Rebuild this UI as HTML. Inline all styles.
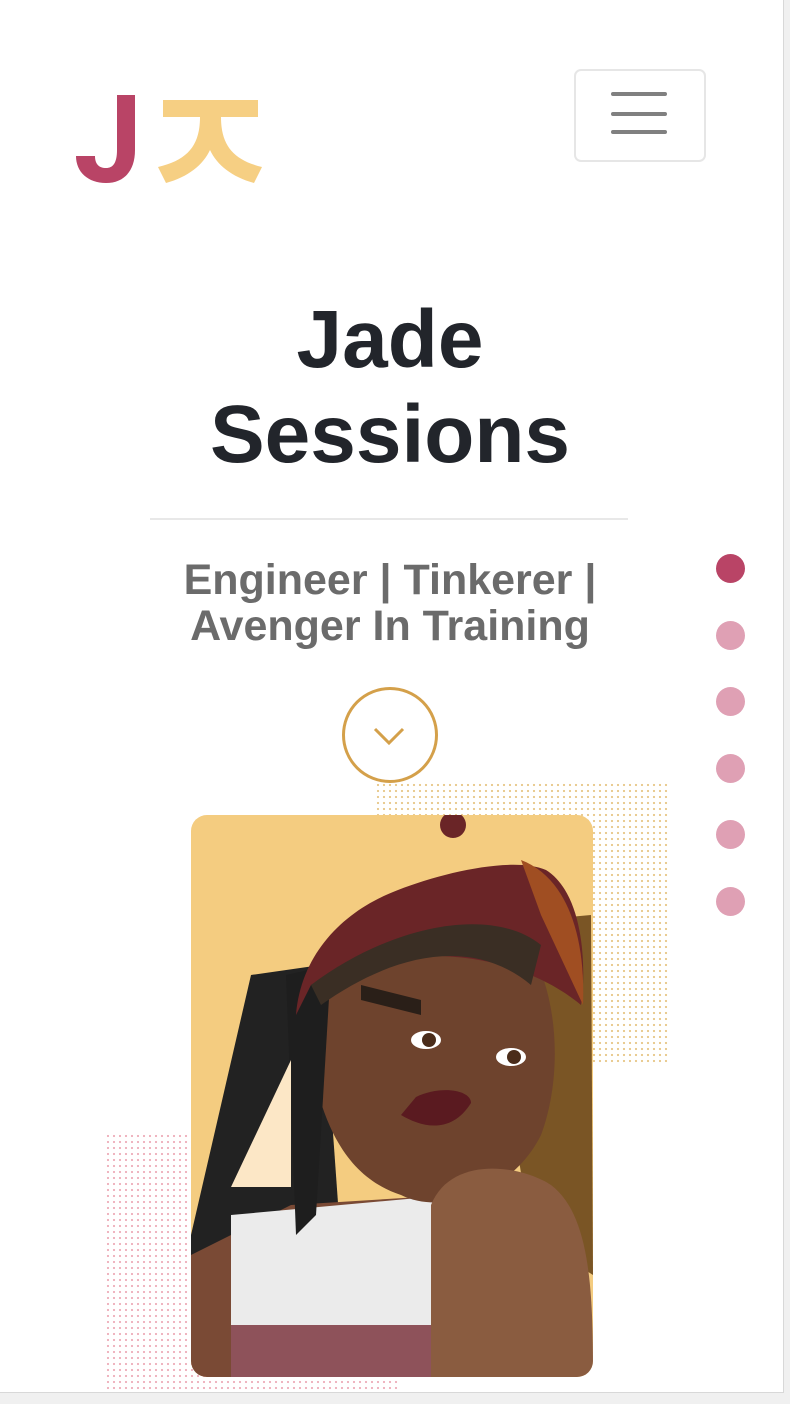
<!DOCTYPE html>
<html><head><meta charset="utf-8"><style>
html,body{margin:0;padding:0}
body{width:790px;height:1404px;position:relative;background:#f0f0f0;font-family:"Liberation Sans",sans-serif;overflow:hidden}
#page{position:absolute;left:0;top:0;width:783px;height:1392px;background:#fff;border-right:1px solid #d8d8d8;border-bottom:1px solid #d8d8d8;overflow:hidden}
.t{position:absolute;left:0;width:780px;text-align:center;color:#22252b;font-weight:bold}
.dot{position:absolute;left:716px;width:29px;height:29px;border-radius:50%;background:#dfa0b4}
</style></head><body><div id="page">
<svg style="position:absolute;left:60px;top:80px" width="220" height="110" viewBox="60 80 220 110">
<path d="M117 95 L135 95 L135 150 C135 172 123 183 106 183 C88 183 76 172 76 156 L95 156 C95 164 99 168 106 168 C113 168 117 163 117 150 Z" fill="#b94466"/>
<rect x="163" y="100" width="95" height="17" fill="#f6cf83"/>
<path d="M200 117 C200 145 188 160 158 167 L166 183 C188 177 203 165 210 150 C217 165 232 177 254 183 L262 167 C233 160 221 145 221 117 Z" fill="#f6cf83"/>
</svg>
<div style="position:absolute;left:574px;top:69px;width:128px;height:89px;border:2px solid #e6e6e6;border-radius:7px"></div>
<div style="position:absolute;left:611px;top:92px;width:56px;height:4px;background:#808080;border-radius:2px"></div>
<div style="position:absolute;left:611px;top:112px;width:56px;height:4px;background:#808080;border-radius:2px"></div>
<div style="position:absolute;left:611px;top:130px;width:56px;height:4px;background:#808080;border-radius:2px"></div>
<div class="t" style="top:292px;font-size:82px;line-height:95px">Jade<br>Sessions</div>
<div style="position:absolute;left:150px;top:518px;width:478px;height:2px;background:#e8e8e8"></div>
<div class="t" style="top:557px;font-size:43px;line-height:46px;color:#6b6b6b">Engineer | Tinkerer |<br>Avenger In Training</div>
<div style="position:absolute;left:342px;top:687px;width:90px;height:90px;border:3px solid #d4a04a;border-radius:50%"></div>
<svg style="position:absolute;left:372px;top:725px" width="34" height="22"><path d="M3 4 L17 18 L31 4" stroke="#d4a04a" stroke-width="3" fill="none"/></svg>
<div class="dot" style="top:554px;background:#b94466"></div>
<div class="dot" style="top:621px"></div><div class="dot" style="top:687px"></div>
<div class="dot" style="top:754px"></div><div class="dot" style="top:820px"></div><div class="dot" style="top:887px"></div>
<div style="position:absolute;left:375px;top:782px;width:293px;height:284px;background-image:radial-gradient(#e8c98d 1px,transparent 1.3px);background-size:6px 6px"></div>
<div style="position:absolute;left:105px;top:1133px;width:295px;height:259px;background-image:radial-gradient(#eeb1bd 1px,transparent 1.3px);background-size:6px 6px"></div>
<svg style="position:absolute;left:191px;top:815px" width="402" height="562" viewBox="0 0 402 562">
<defs><clipPath id="c"><rect width="402" height="562" rx="16"/></clipPath></defs>
<g clip-path="url(#c)">
<rect width="402" height="562" fill="#f4cc80"/>
<path d="M0 420 L60 160 L130 150 L150 430 L120 450 L0 470Z" fill="#222"/>
<path d="M290 110 L400 100 L402 460 L340 420 Z" fill="#7a5525"/>
<path d="M0 440 L100 390 L260 380 L310 562 L0 562Z" fill="#7a4a35"/>
<path d="M40 400 L260 380 L250 562 L40 562Z" fill="#ebebeb"/>
<path d="M40 510 L250 510 L250 562 L40 562Z" fill="#8e525a"/>
<path d="M110 170 C130 110 210 80 300 100 C360 120 380 240 350 320 C320 380 250 400 210 380 C150 360 120 300 110 170Z" fill="#6e432d"/>
<path d="M240 390 C260 340 330 350 360 370 C400 400 402 480 402 562 L240 562Z" fill="#8a5c40"/>
<path d="M95 160 L140 150 L125 400 L105 420 Z" fill="#1e1e1e"/>
<path d="M40 372 L100 372 L100 245 Z" fill="#fce7c6"/>
<path d="M105 200 C110 140 150 100 195 80 C240 60 320 40 355 55 C395 80 395 160 390 190 C330 140 220 120 120 170 Z" fill="#6a2527"/>
<path d="M330 45 C370 60 395 110 392 190 L350 100Z" fill="#a04e22"/>
<circle cx="262" cy="10" r="13" fill="#6a2527"/>
<path d="M120 170 C200 110 300 90 350 130 L340 170 C280 120 200 140 130 190Z" fill="#3a2e24"/>
<path d="M170 170 L230 185 L230 200 L170 185Z" fill="#2a1f18"/>
<path d="M225 282 C250 270 280 275 280 288 C260 320 230 312 210 300Z" fill="#5a1a20"/>
<ellipse cx="235" cy="225" rx="15" ry="9" fill="#fff"/><circle cx="238" cy="225" r="7" fill="#4a2c1a"/>
<ellipse cx="320" cy="242" rx="15" ry="9" fill="#fff"/><circle cx="323" cy="242" r="7" fill="#4a2c1a"/>
</g></svg>
</div></body></html>
